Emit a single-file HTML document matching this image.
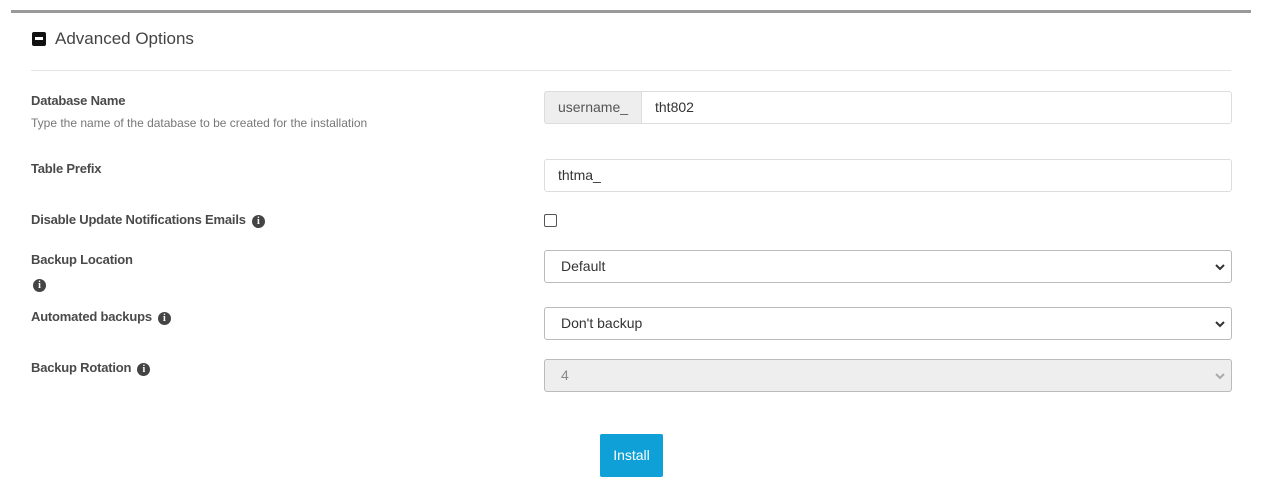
<!DOCTYPE html>
<html><head><style>
body{margin:0;width:1271px;height:489px;background:#fff;font-family:"Liberation Sans",sans-serif;position:relative;overflow:hidden;color:#333}
.a{position:absolute}
.lbl{position:absolute;left:31px;font-size:13px;font-weight:bold;color:#4a4a4a;letter-spacing:-0.2px}
.inp{position:absolute;left:544px;width:688px;height:33px;border:1px solid #ddd;border-radius:3px;box-sizing:border-box;font-size:14px;color:#333;line-height:31px;padding-left:13px;background:#fff}
.sel{border-color:#bbb;padding-left:16px}
.i{display:inline-block;width:13px;height:13px;border-radius:50%;background:#444;color:#fff;font-size:10px;font-weight:bold;text-align:center;line-height:13px;font-family:"Liberation Serif",serif;vertical-align:0px;margin-left:6px}
.chev{position:absolute;right:6px;top:12px}
</style></head><body>
<div class="a" style="left:11px;top:10px;width:1240px;height:3px;background:#999"></div>
<div class="a" style="left:32px;top:32px;width:14px;height:14px;background:#111;border-radius:2px"><div style="position:absolute;left:3px;top:5px;width:8px;height:3px;background:#fff"></div></div>
<div class="a" style="left:55px;top:29px;font-size:17px;color:#444">Advanced Options</div>
<div class="a" style="left:31px;top:70px;width:1200px;height:1px;background:#e5e5e5"></div>

<div class="lbl" style="top:93px">Database Name</div>
<div class="a" style="left:31px;top:116px;font-size:12px;color:#777">Type the name of the database to be created for the installation</div>
<div class="inp" style="top:91px;padding-left:110px">tht802</div>
<div class="a" style="left:544px;top:91px;width:98px;height:33px;background:#eee;border:1px solid #ddd;border-radius:3px 0 0 3px;box-sizing:border-box;font-size:14px;line-height:31px;text-align:center;color:#555">username_</div>

<div class="lbl" style="top:161px">Table Prefix</div>
<div class="inp" style="top:159px">thtma_</div>

<div class="lbl" style="top:212px">Disable Update Notifications Emails<span class="i">i</span></div>
<div class="a" style="left:544px;top:214px;width:13px;height:13px;border:1px solid #555;border-radius:2px;box-sizing:border-box"></div>

<div class="lbl" style="top:252px">Backup Location</div>
<div class="a" style="left:27px;top:275px"><span class="i">i</span></div>
<div class="inp sel" style="top:250px">Default<svg class="chev" width="10" height="8" viewBox="0 0 10 8"><path d="M1 2l4 4 4-4" stroke="#333" stroke-width="2" fill="none"/></svg></div>

<div class="lbl" style="top:309px">Automated backups<span class="i">i</span></div>
<div class="inp sel" style="top:307px">Don't backup<svg class="chev" width="10" height="8" viewBox="0 0 10 8"><path d="M1 2l4 4 4-4" stroke="#333" stroke-width="2" fill="none"/></svg></div>

<div class="lbl" style="top:360px">Backup Rotation<span class="i">i</span></div>
<div class="inp sel" style="top:359px;background:#eee;color:#888">4<svg class="chev" width="10" height="8" viewBox="0 0 10 8"><path d="M1 2l4 4 4-4" stroke="#aaa" stroke-width="2" fill="none"/></svg></div>

<div class="a" style="left:600px;top:434px;width:63px;height:43px;background:#0ea0d6;border-radius:2px;color:#fff;font-size:14px;line-height:43px;text-align:center">Install</div>
</body></html>
